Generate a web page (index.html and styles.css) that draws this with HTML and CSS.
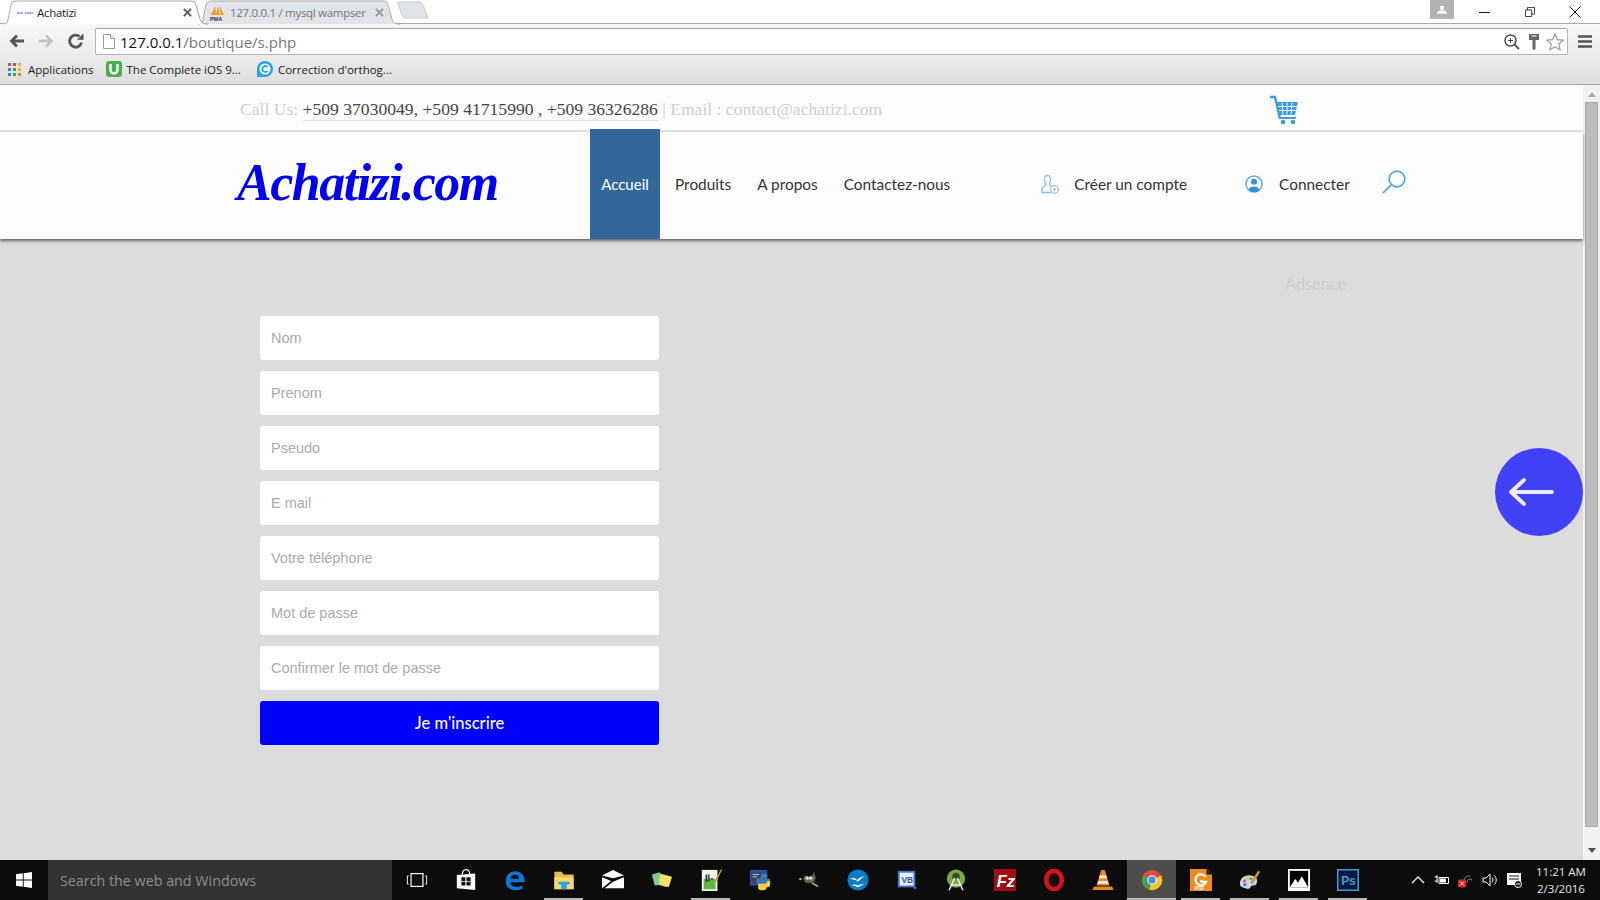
FILE: index.html
```html
<!DOCTYPE html>
<html lang="fr">
<head>
<meta charset="utf-8">
<title>Achatizi</title>
<link rel="stylesheet" href="styles.css">
</head>
<body>
<div class="browser">
  <div class="tabstrip">
    <div class="tab tab-active">
      <svg class="tab-shape" viewBox="0 0 200 24" preserveAspectRatio="none"><path d="M0 24 C5 24 5 20 6 14 L8 5 C9 1 11 1 14 1 H186 C189 1 191 1 192 5 L196 19 C197 23 199 24 204 24" fill="#fff" stroke="#aaa"/></svg>
      <svg class="favicon" viewBox="0 0 16 8"><path d="M0 4h6M8 4h8" stroke="#7a6de8" stroke-width="1.6" stroke-dasharray="1.5 .6"/></svg>
      <span class="tab-title">Achatizi</span>
      <svg class="tab-x" viewBox="0 0 10 10"><path d="M1 1l8 8M9 1l-8 8" stroke="#555" stroke-width="2"/></svg>
    </div>
    <div class="tab tab-back">
      <svg class="tab-shape" viewBox="0 0 200 24" preserveAspectRatio="none"><path d="M0 24 C5 24 5 20 6 14 L8 5 C9 1 11 1 14 1 H186 C189 1 191 1 192 5 L196 19 C197 23 199 24 204 24" fill="#dfe3ea" stroke="#aaa"/></svg>
      <svg class="favicon-pma" viewBox="0 0 16 16"><path d="M1 10L5 1l1 9zM6 10l2-9 2 9zM10.500 10L10 1l4 9z" fill="#f29a1f"/><text x="0" y="15.500" class="pma-text">PMA</text></svg>
      <span class="tab-title tab-title-dim">127.0.0.1 / mysql wampser</span>
      <svg class="tab-x" viewBox="0 0 10 10"><path d="M1 1l8 8M9 1l-8 8" stroke="#999" stroke-width="2"/></svg>
    </div>
    <svg class="newtab" viewBox="0 0 32 18"><path d="M1 1h21c2 0 3 1 4 3l5 12c.3 1 0 1-1 1H9c-2 0-3-1-4-3L1 3C.6 1.500.5 1 1 1z" fill="#dfe3ea" stroke="#ccc"/></svg>
    <div class="winctl">
      <div class="profile"><svg viewBox="0 0 12 10" class="profile-ico"><circle cx="6" cy="2.800" r="2.500" fill="#fff"/><path d="M0 10c0-3 3-4 6-4s6 1 6 4z" fill="#fff"/></svg></div>
      <svg class="ctl ctl-min" viewBox="0 0 12 12"><path d="M0 6.500h11" stroke="#111"/></svg>
      <svg class="ctl ctl-res" viewBox="0 0 12 12"><path d="M.5 3.500h7.500v8H.500zM3 3.500V.500h8.500v8H8" fill="none" stroke="#111"/></svg>
      <svg class="ctl ctl-close" viewBox="0 0 12 12"><path d="M.5.5l11 11M11.500.5l-11 11" stroke="#111"/></svg>
    </div>
  </div>
  <div class="toolbar">
    <svg class="tb-ico" viewBox="0 0 16 16"><path d="M15 8H3M8 2.500L2.500 8 8 13.500" fill="none" stroke="#555" stroke-width="2.800"/></svg>
    <svg class="tb-ico" viewBox="0 0 16 16"><path d="M1 8h12M8 2.500L13.500 8 8 13.500" fill="none" stroke="#c4c4c4" stroke-width="2.800"/></svg>
    <svg class="tb-ico" viewBox="0 0 16 16"><path d="M13.500 9.500A6 6 0 1 1 11.500 3.500" fill="none" stroke="#555" stroke-width="2.800"/><path d="M9 6.800h6.500V.5z" fill="#555"/></svg>
    <div class="omnibox">
      <svg class="page-ico" viewBox="0 0 12 15"><path d="M.5.500h7l4 4v10H.500z" fill="#fff" stroke="#999"/><path d="M7.500.5v4h4" fill="#eee" stroke="#999"/></svg>
      <span class="url"><span class="url-host">127.0.0.1</span>/boutique/s.php</span>
      <span class="omni-right">
        <svg class="om-zoom" viewBox="0 0 16 16"><circle cx="6.500" cy="6.500" r="5.500" fill="none" stroke="#444" stroke-width="1.400"/><path d="M4 6.500h5M6.500 4v5" stroke="#444"/><path d="M10.500 10.500L15 15" stroke="#555" stroke-width="2"/></svg>
        <svg class="om-key" viewBox="0 0 10 16"><path d="M0 0h10v6H6.500v9L5 16l-1.500-1V6H0z" fill="#666"/><path d="M2.500 2h5" stroke="#eee" stroke-width="1.200"/></svg>
        <svg class="om-star" viewBox="0 0 18 18"><path d="M9 1l2.300 5.600 6 .5-4.600 3.900 1.400 5.900L9 13.700 3.900 16.900l1.400-5.900L.7 7.100l6-.5z" fill="#fff" stroke="#999" stroke-width="1.200"/></svg>
      </span>
    </div>
    <svg class="menu-ico" viewBox="0 0 14 13"><path d="M0 1.500h14M0 6.500h14M0 11.500h14" stroke="#555" stroke-width="2.600"/></svg>
  </div>
  <div class="bookmarks">
    <span class="bm">
      <svg class="bm-apps" viewBox="0 0 13 13"><rect width="3" height="3" fill="#e04b3a"/><rect x="5" width="3" height="3" fill="#e04b3a"/><rect x="10" width="3" height="3" fill="#f0b429"/><rect y="5" width="3" height="3" fill="#3a7de0"/><rect x="5" y="5" width="3" height="3" fill="#3fa34d"/><rect x="10" y="5" width="3" height="3" fill="#f0b429"/><rect y="10" width="3" height="3" fill="#3a7de0"/><rect x="5" y="10" width="3" height="3" fill="#3fa34d"/><rect x="10" y="10" width="3" height="3" fill="#e8862a"/></svg>
      Applications
    </span>
    <span class="bm bm-udemy">
      <svg class="bm-fav" viewBox="0 0 16 16"><rect width="16" height="16" rx="3" fill="#4cae4f"/><path d="M4.500 3v6a3.500 3.500 0 0 0 7 0V3" fill="none" stroke="#fff" stroke-width="2.400"/></svg>
      The Complete iOS 9...
    </span>
    <span class="bm bm-correct">
      <svg class="bm-fav" viewBox="0 0 16 16"><path d="M0 16V8a8 8 0 1 1 8 8z" fill="#1fa8d8"/><circle cx="8" cy="8" r="5.500" fill="#fff"/><path d="M10.600 6A3 3 0 1 0 10.600 10" fill="none" stroke="#1fa8d8" stroke-width="1.800"/></svg>
      Correction d'orthog...
    </span>
  </div>
</div>

<div class="viewport">
  <main class="page">
    <div class="topbar">
      <p class="contact"><span class="muted">Call Us: </span><span class="phones">+509 37030049, +509 41715990 , +509 36326286</span><span class="muted"> | Email : contact@achatizi.com</span></p>
      <svg class="cart" viewBox="0 0 30 30"><path d="M1 2h5l5 22" fill="none" stroke="#3d9be0" stroke-width="2.400"/><path d="M8 7h21l-3 13H11z" fill="#3d9be0"/><path d="M13 7.500l1 12M18 7.500v12M23 7.500l-1 12M9 11.500h19M10 15.500h17" stroke="#fff" stroke-width=".9"/><path d="M11 23h16" stroke="#3d9be0" stroke-width="2"/><circle cx="14" cy="27" r="2.300" fill="#3d9be0"/><circle cx="24" cy="27" r="2.300" fill="#3d9be0"/></svg>
    </div>
    <header class="header">
      <div class="logo">Achatizi.com</div>
      <nav class="nav">
        <a class="nav-item nav-active">Accueil</a>
        <a class="nav-item">Produits</a>
        <a class="nav-item">A propos</a>
        <a class="nav-item">Contactez-nous</a>
      </nav>
      <div class="account">
        <svg class="acc-ico" viewBox="0 0 18 20"><path d="M6 1.500c3 0 4 2.500 3.500 5-.3 1.500-1 2-1 3.500 0 1.500 1.500 2 2 2.500M5 10c0-1.500-1.200-2-1.400-3.500C3.200 4 3.500 1.500 6 1.500M5 10c0 2-4 2-4 5v3.500h9" fill="none" stroke="#8cc0ea" stroke-width="1.300"/><circle cx="13.500" cy="15.500" r="3.800" fill="none" stroke="#8cc0ea" stroke-width="1.200"/><path d="M11.800 15.500h3.400M13.500 13.800v3.400" stroke="#8cc0ea"/></svg>
        <span class="acc-label acc-create">Créer un compte</span>
        <svg class="acc-ico acc-ico-user" viewBox="0 0 18 18"><circle cx="9" cy="9" r="8" fill="#fff" stroke="#5aa7e3" stroke-width="1.400"/><circle cx="9" cy="6.800" r="3" fill="#2f8fdc"/><path d="M3.500 15c1-3 3-3.500 5.500-3.500s4.500.5 5.500 3.500c-3 2.500-8 2.500-11 0z" fill="#2f8fdc"/></svg>
        <span class="acc-label">Connecter</span>
        <svg class="search" viewBox="0 0 24 24"><circle cx="15" cy="9" r="7.800" fill="none" stroke="#4aa3e6" stroke-width="1.700"/><path d="M9.500 14.500L1 23" stroke="#4aa3e6" stroke-width="1.700"/></svg>
      </div>
    </header>
    <div class="ad-row"><span class="adsence">Adsence</span></div>
    <form class="signup">
      <input class="field" placeholder="Nom">
      <input class="field" placeholder="Prenom">
      <input class="field" placeholder="Pseudo">
      <input class="field" placeholder="E mail">
      <input class="field" placeholder="Votre téléphone">
      <input class="field" placeholder="Mot de passe">
      <input class="field" placeholder="Confirmer le mot de passe">
      <button type="button" class="submit">Je m'inscrire</button>
    </form>
    <div class="back-btn"><svg viewBox="0 0 46 30" class="back-arrow"><path d="M44 15H3M16 3L3 15l13 12" fill="none" stroke="#ecECfb" stroke-width="3.800" stroke-linecap="round" stroke-linejoin="round"/></svg></div>
  </main>
  <aside class="scrollbar">
    <span class="sb-up"></span>
    <span class="sb-thumb"></span>
    <span class="sb-down"></span>
  </aside>
</div>

<footer class="taskbar">
  <div class="start"><svg viewBox="0 0 16 16" class="start-ico"><path d="M0 2.300L6.800 1.300v6.300H0zM7.700 1.200L16 0v7.600H7.700zM0 8.400h6.800v6.300L0 13.700zM7.700 8.400H16V16l-8.300-1.200z" fill="#fff"/></svg></div>
  <div class="cortana">Search the web and Windows</div>
  <div class="apps">
    <span class="app"><svg viewBox="0 0 24 24"><rect x="5.500" y="5" width="13" height="14" fill="none" stroke="#fff" stroke-width="1.300"/><path d="M3 7.500H1.500v9H3M21 7.500h1.500v9H21" fill="none" stroke="#fff"/></svg></span>
    <span class="app"><svg viewBox="0 0 24 24"><path d="M2 6.500l20-1.500v18l-20-2z" fill="#fff"/><path d="M8 6c0-7 8-7 8-.5" fill="none" stroke="#fff" stroke-width="1.300"/><path d="M7 9h4.300v4H7zM12.500 9H17v4h-4.500zM7 14h4.300v4H7zM12.500 14H17v4h-4.500z" fill="#111"/></svg></span>
    <span class="app"><svg viewBox="0 0 24 24"><path d="M12 2.500a10 10 0 0 0-10 11c0 8 8 12 18 8v-3.500c-6 3-13 1.500-13-3.500h15.500C23 7 18.500 2.500 12 2.500zM7 10.500c.5-3 2.500-4.200 5-4.200s4.500 1.500 4.500 4.200z" fill="#0a78d7" fill-rule="evenodd"/></svg></span>
    <span class="app app-run"><svg viewBox="0 0 24 24"><path d="M1.500 3h8l2 3h11v16h-21z" fill="#e8bb45"/><path d="M1.500 9h21v13h-21z" fill="#f7d774"/><path d="M6 14h12v3h-3v5H9v-5H6z" fill="#2aa6e6"/></svg></span>
    <span class="app"><svg viewBox="0 0 24 24"><path d="M0 7L12 1l12 6L12 10z" fill="#fff"/><path d="M0 9L10 13 0 21zM24 9v12H3L12 14z" fill="#fff"/></svg></span>
    <span class="app"><svg viewBox="0 0 24 24"><path d="M1 6l9-2.500 3 13.500-9 1z" fill="#7fcf86"/><path d="M10 5l11 3-4 12-10-3z" fill="#8ccbee"/><path d="M10 6l13 2.500-3.500 11-11-3z" fill="#f6e05e"/></svg></span>
    <span class="app app-run"><svg viewBox="0 0 24 24"><path d="M2 1h17v23H2z" fill="#f5f5f0"/><path d="M4 11h13v11H4z" fill="#5ab84a"/><path d="M6 6h2v8H6zM9 6h1.500v8H9zM11.500 10h3v1.500h-3z" fill="#333"/><path d="M23 0l-8 15-1 3 2.500-2L24 1z" fill="#d6a21c"/></svg></span>
    <span class="app"><svg viewBox="0 0 24 24"><path d="M1 1h19v17H1z" fill="#1c55b0"/><path d="M3 4h15v12H3z" fill="#3a4558"/><path d="M4 6h7M4 8.500h5" stroke="#ccc"/><path d="M8 13c0-3 2-3 5-3V7c0-3 7-3 7 0v3h-5v.5h8v5c0 2-2 2-3 2H13c-2 0-5-1-5-4.500z" fill="#3b78b8"/><path d="M10 16h7c1.500 0 3-1 3-3h3v4c0 3-2 3-4 3v1c0 3-9 3-9 0z" fill="#f7cf49"/></svg></span>
    <span class="app"><svg viewBox="0 0 24 24"><path d="M7 7l5 1 4-1 1-4 2 5c1 3-1 6-4 7l-5 0C7 15 6 11 7 7z" fill="#6b6558"/><circle cx="10" cy="10" r="1.800" fill="#ddd"/><circle cx="14" cy="10" r="1.800" fill="#ddd"/><circle cx="2.500" cy="11" r="1.200" fill="#ccc"/><path d="M4 11l4 0" stroke="#555"/><path d="M15 15l7 4" stroke="#c99a5c" stroke-width="1.800"/></svg></span>
    <span class="app"><svg viewBox="0 0 24 24"><circle cx="12" cy="12" r="11.500" fill="#0a7cc8"/><path d="M3 11c4-2 6-1 8 1 3-3 6-4 9-4-3 1-5 3-8 6-2-2-5-3-9-3zM5 18c3-2 5-1 7 0 2-1 4-2 7-2-2 1-4 2-7 4-2-1-4-2-7-2z" fill="#fff"/></svg></span>
    <span class="app"><svg viewBox="0 0 24 24"><path d="M2 2h19v18H2z" fill="#3f78d8"/><path d="M4 4h15v14H4z" fill="#eaf1fb"/><text x="6" y="15" class="vb-text">VB</text><path d="M18 20h5l-2 2z" fill="#3f78d8"/></svg></span>
    <span class="app"><svg viewBox="0 0 24 24"><circle cx="12" cy="10.500" r="10" fill="#77ab43"/><path d="M12 4a4 4 0 0 0-4 4v3h8V8a4 4 0 0 0-4-4z" fill="#3c4a33"/><path d="M10.500 10L4.500 23M13.500 10l6 13M7.500 17.500h9" stroke="#e8efe0" stroke-width="1.600" fill="none"/></svg></span>
    <span class="app"><svg viewBox="0 0 24 24"><rect width="24" height="24" fill="#a10e11"/><text x="3" y="20" class="fz-text">Fz</text></svg></span>
    <span class="app"><svg viewBox="0 0 24 24"><ellipse cx="12" cy="12" rx="8.500" ry="10" fill="none" stroke="#d6121f" stroke-width="5"/></svg></span>
    <span class="app"><svg viewBox="0 0 24 24"><path d="M10 1h4l5 17H5z" fill="#f08a1d"/><path d="M8.500 7h7l1 3h-9zM6.800 13h10.400l1 3H5.800z" fill="#f2f2f2"/><path d="M2 19h20l1.500 4H.5z" fill="#e8871c"/></svg></span>
    <span class="app app-active"><svg viewBox="0 0 24 24"><circle cx="12" cy="12" r="11" fill="#dd4b39"/><path d="M12 12L1.900 7.500A11 11 0 0 0 9 22.600z" fill="#3fa44f"/><path d="M12 12l-3 10.600A11 11 0 0 0 22.800 9.500 11 11 0 0 0 22 7z" fill="#f6c528"/><circle cx="12" cy="12" r="5.200" fill="#fff"/><circle cx="12" cy="12" r="4" fill="#4a8bf0"/></svg></span>
    <span class="app app-run"><svg viewBox="0 0 24 24"><path d="M0 0h18l6 6v18H0z" fill="#f28a1d"/><path d="M18 0h2l4 4v2h-6z" fill="#222"/><path d="M17 8.500A6 6 0 1 0 17.500 14h-5v-2" fill="none" stroke="#fff" stroke-width="2.500"/><text x="5" y="22.800" class="pdf-text">PDF</text></svg></span>
    <span class="app app-run"><svg viewBox="0 0 24 24"><path d="M1 16C1 9 8 6 13 7c6 1 8 5 6 9-1 3-5 1-6 3-1 3-4 3-6 2-4-1-6-2-6-5z" fill="#c6dced"/><circle cx="6" cy="13" r="1.800" fill="#e85a4f"/><circle cx="9" cy="10" r="1.800" fill="#f2c12e"/><circle cx="13" cy="10.500" r="1.800" fill="#5ab84a"/><circle cx="6.500" cy="17" r="1.800" fill="#3a7de0"/><path d="M12 15L21 2l2 1-8 14z" fill="#c9974e"/></svg></span>
    <span class="app app-run"><svg viewBox="0 0 24 24"><rect width="24" height="24" fill="#fff"/><rect x="2" y="2" width="20" height="18" fill="#000"/><path d="M2 20l6-9 3 4 4-7 7 12z" fill="#fff"/></svg></span>
    <span class="app app-run"><svg viewBox="0 0 24 24"><rect x=".8" y=".8" width="22.400" height="22.400" fill="#061b40" stroke="#4a9ad8" stroke-width="1.600"/><text x="4.500" y="17" class="ps-text">Ps</text></svg></span>
  </div>
  <div class="tray">
    <svg class="tray-ico" viewBox="0 0 16 16"><path d="M2 11l6-6 6 6" fill="none" stroke="#eee" stroke-width="1.400"/></svg>
    <svg class="tray-ico" viewBox="0 0 16 16"><path d="M.5 5h3M.5 9h3M3 3v8" stroke="#fff"/><path d="M5 5.500h9.500v6H5z" fill="none" stroke="#fff"/><path d="M6 6.500h6v4H6z" fill="#fff"/></svg>
    <svg class="tray-ico" viewBox="0 0 16 16"><path d="M6 9a5 5 0 0 1 6-5M9 11a3 3 0 0 1 5-3" fill="none" stroke="#888"/><rect x="0" y="7.500" width="8" height="8" rx="1.500" fill="#e0202e"/><path d="M2 9.500l4 4M6 9.500l-4 4" stroke="#fff"/></svg>
    <svg class="tray-ico" viewBox="0 0 16 16"><path d="M1 6h3l4-4v12l-4-4H1z" fill="none" stroke="#fff"/><path d="M10 5.500c1.300 1.500 1.300 3.500 0 5M12.500 3.500c2.300 2.500 2.300 6.500 0 9" fill="none" stroke="#fff"/></svg>
    <svg class="tray-ico" viewBox="0 0 16 16"><path d="M1 1h14v12H1z" fill="#fff"/><path d="M3 4h10M3 7h10" stroke="#111"/><circle cx="12" cy="12" r="3.500" fill="#111" stroke="#fff"/><path d="M10 12h4" stroke="#fff"/></svg>
    <div class="clock"><span>11:21 AM</span><span>2/3/2016</span></div>
  </div>
</footer>
</body>
</html>
```
FILE: styles.css
```css
* { box-sizing: border-box; }
html, body { margin: 0; padding: 0; }
body { width: 1600px; height: 900px; overflow: hidden; display: flex; flex-direction: column; font-family: "Open Sans", sans-serif; background: #dcdcdc; }

/* browser chrome */
.browser { height: 85px; flex: none; display: flex; flex-direction: column; background: linear-gradient(#fdfdfd, #f4f4f4 40%, #dedede); border-bottom: 1px solid #a9a9a9; }
.tabstrip { height: 24px; flex: none; display: flex; align-items: flex-end; background: #fff; border-bottom: 1px solid #aaa; padding-left: 3px; }
.tab { position: relative; width: 201px; height: 24px; display: flex; align-items: center; padding: 1px 12px 0 14px; margin-right: -6px; margin-bottom: -1px; font-size: 11.500px; letter-spacing: -.3px; }
.tab-active { z-index: 2; }
.tab-back { width: 198px; padding-left: 12px; }
.tab-shape { position: absolute; inset: 0; width: 100%; height: 100%; overflow: visible; }
.favicon, .favicon-pma, .tab-title, .tab-x { position: relative; }
.favicon { width: 16px; height: 8px; flex: none; margin-right: 4px; }
.favicon-pma { width: 16px; height: 16px; flex: none; margin-right: 4px; }
.pma-text { font: bold 5.500px "Liberation Sans", sans-serif; fill: #333; letter-spacing: 0; }
.tab-title { flex: 1; white-space: nowrap; color: #222; }
.tab-title-dim { color: #777; }
.tab-x { width: 9px; height: 9px; flex: none; margin-left: 6px; }
.newtab { width: 32px; height: 18px; flex: none; margin: 0 0 4px 7px; }
.winctl { margin-left: auto; display: flex; align-self: flex-start; height: 24px; padding-right: 19px; }
.profile { width: 24px; height: 19px; background: #b2b2b2; display: flex; align-items: center; justify-content: center; margin-right: 25px; }
.profile-ico { width: 10px; height: 9px; }
.ctl { width: 12px; height: 12px; margin-top: 6px; }
.ctl-res { margin: 7px 34px 0 34px; width: 10px; height: 10px; }
.toolbar { height: 34px; flex: none; display: flex; align-items: center; padding: 0 8px 0 9px; }
.tb-ico { width: 16px; height: 16px; margin-right: 13px; flex: none; }
.tb-ico:nth-child(2) { margin-right: 14px; }
.tb-ico:nth-child(3) { margin-right: 11px; }
.omnibox { flex: 1; height: 27px; margin-top: 1px; background: #fff; border: 1px solid #b5b5b5; border-top-color: #a5a5a5; border-radius: 2px; display: flex; align-items: center; padding-left: 7px; padding-right: 3px; font-size: 15px; }
.page-ico { width: 12px; height: 15px; margin-right: 5px; flex: none; }
.url { color: #777; }
.url-host { color: #111; }
.omni-right { margin-left: auto; display: flex; align-items: center; }
.om-zoom { width: 16px; height: 16px; margin-right: 9px; }
.om-key { width: 10px; height: 16px; margin-right: 7px; }
.om-star { width: 18px; height: 18px; }
.menu-ico { width: 14px; height: 13px; margin-left: 10px; flex: none; }
.bookmarks { flex: 1; display: flex; align-items: center; padding: 0 0 4px 8px; font-size: 11.500px; color: #222; }
.bm { display: flex; align-items: center; white-space: nowrap; }
.bm-apps { width: 13px; height: 13px; margin-right: 7px; }
.bm-fav { width: 16px; height: 16px; margin-right: 5px; }
.bm-udemy { margin-left: 12px; }
.bm-correct { margin-left: 16px; }

/* page */
.viewport { flex: 1; min-height: 0; display: flex; }
.page { position: relative; flex: 1; min-width: 0; background: #dcdcdc; }
.topbar { height: 47px; background: #fdfdfd; border-bottom: 2px solid #e4e4e4; display: flex; align-items: center; padding-left: 240px; }
.contact { margin: 0; width: 1029px; font: 17.600px "Liberation Serif", serif; color: #cfcfcf; white-space: nowrap; padding-top: 3px; }
.phones { color: #444; border-bottom: 1px solid #ddd; padding-bottom: 1px; }
.muted { color: #cfcfcf; }
.cart { width: 30px; height: 30px; flex: none; margin-top: 4px; }
.header { height: 107px; background: #fdfdfd; box-shadow: 0 2px 3px rgba(0,0,0,.55); display: flex; padding-left: 237px; position: relative; }
.logo { width: 353px; padding-top: 21px; font: italic bold 52px "Liberation Serif", serif; color: #0000f0; letter-spacing: -1.500px; white-space: nowrap; }
.nav { display: flex; gap: 26px; font: 15.400px Lato, sans-serif; color: #333; }
.nav-item { display: flex; align-items: center; padding-bottom: 3px; }
.nav-active { height: 110px; margin: -3px -11px 0 0; padding: 0 11px; background: #336699; color: #fff; width: 70px; justify-content: center; font-size: 15px; }
.account { display: flex; align-items: center; font: 15.400px Lato, sans-serif; color: #333; margin-left: 91px; padding-bottom: 3px; }
.acc-ico { width: 18px; height: 20px; flex: none; }
.acc-ico-user { height: 18px; margin-left: 58px; }
.acc-label { margin-left: 16px; }
.acc-create { margin-left: 15px; }
.search { width: 24px; height: 24px; margin: -4px 0 0 32px; flex: none; }
.ad-row { display: flex; justify-content: flex-end; padding: 35px 237px 0 0; height: 77px; }
.adsence { font: 16.300px Lato, sans-serif; color: #cdcdcd; }
.signup { width: 399px; margin-left: 260px; display: flex; flex-direction: column; gap: 11px; }
.field { height: 44px; border: 0; border-radius: 3px; background: #fff; padding: 0 11px 1px; font: 14.500px "Liberation Sans", sans-serif; }
.field::placeholder { color: #aaa; opacity: 1; }
.submit { height: 44px; border: 0; border-radius: 3px; background: #0000ff; color: #fff; font: 500 16.500px Lato, sans-serif; padding-top: 1px; }
.back-btn { position: absolute; left: 1495px; top: 363px; width: 88px; height: 88px; border-radius: 50%; background: #4141f7; display: flex; align-items: center; justify-content: center; }
.back-arrow { width: 46px; height: 30px; margin-right: 17px; }

/* scrollbar */
.scrollbar { width: 17px; flex: none; background: #f1f1f1; display: flex; flex-direction: column; align-items: flex-end; padding-right: 2px; }
.sb-up, .sb-down { width: 0; height: 0; border: 4px solid transparent; flex: none; margin-right: 2px; }
.sb-up { border-bottom: 5px solid #a8a8a8; border-top: 0; margin-top: 7px; margin-bottom: 5px; }
.sb-thumb { width: 13px; height: 725px; background: #bbb; border: 1px solid #aaa; flex: none; }
.sb-down { border-top: 5px solid #505050; border-bottom: 0; margin-top: 21px; }

/* taskbar */
.taskbar { height: 40px; flex: none; display: flex; background: #0c0c0c; color: #fff; }
.start { width: 48px; flex: none; display: flex; align-items: center; justify-content: center; }
.start-ico { width: 16px; height: 16px; }
.cortana { width: 344px; flex: none; background: #333; display: flex; align-items: center; padding-left: 12px; font: 14.300px "Open Sans", sans-serif; color: #8e8e8e; }
.apps { display: flex; flex: none; }
.app { width: 49px; height: 40px; display: flex; align-items: center; justify-content: center; position: relative; }
.app svg { width: 22px; height: 22px; }
.app-run::after { content: ""; position: absolute; left: 5px; right: 5px; bottom: 0; height: 2px; background: #b9b9b9; }
.app-active { background: #4d4d4d; }
.app-active::after { content: ""; position: absolute; left: 0; right: 0; bottom: 0; height: 2px; background: #b9b9b9; }
.vb-text { font: bold 9px "Liberation Sans", sans-serif; fill: #1c55b0; }
.fz-text { font: italic bold 18px "Liberation Sans", sans-serif; fill: #fff; }
.pdf-text { font: bold 5.500px "Liberation Sans", sans-serif; fill: #fff; }
.ps-text { font: bold 13px "Liberation Sans", sans-serif; fill: #4a9ad8; }
.tray { display: flex; align-items: center; flex: 1; padding-left: 38px; gap: 8px; }
.tray-ico { width: 16px; height: 16px; flex: none; }
.clock { display: flex; flex-direction: column; align-items: center; font: 11.500px/17px "Open Sans", sans-serif; color: #e6e6e6; margin-left: 6px; }
```
